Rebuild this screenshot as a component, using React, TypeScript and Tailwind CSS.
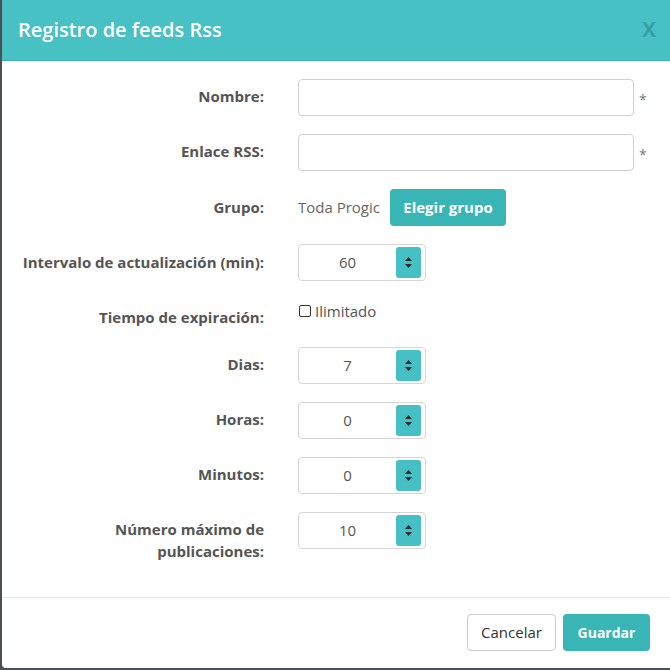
import React from "react";

const FONT = { fontFamily: "'Open Sans', 'Noto Sans', sans-serif" };

function Label({ children, pt = "pt-[7px]" }: { children: React.ReactNode; pt?: string }) {
  return (
    <div className={`w-[262px] shrink-0 text-right text-[15px] font-bold leading-[22px] text-[#555] ${pt}`}>
      {children}
    </div>
  );
}

function Spinner() {
  return (
    <div className="my-[3px] mr-[4px] flex h-[31px] w-[25px] flex-col items-center justify-center gap-[3px] rounded-[3px] bg-[#47c0c5]">
      <svg width="7" height="4" viewBox="0 0 7 4">
        <path d="M0 4 L3.5 0 L7 4 Z" fill="#2b2b2b" />
      </svg>
      <svg width="7" height="4" viewBox="0 0 7 4">
        <path d="M0 0 L7 0 L3.5 4 Z" fill="#2b2b2b" />
      </svg>
    </div>
  );
}

function NumberInput({ value }: { value: string }) {
  return (
    <div className="flex h-[37px] w-[128px] items-center rounded-[4px] border border-[#d6d6d6] bg-white">
      <span className="flex-1 text-center text-[15px] text-[#555]">{value}</span>
      <Spinner />
    </div>
  );
}

function TextInput() {
  return (
    <div className="flex items-center">
      <div className="h-[37px] w-[336px] rounded-[4px] border border-[#d0d0d0] bg-white" />
      <span className="ml-[5px] mt-[4px] text-[14px] text-[#777]">*</span>
    </div>
  );
}

const NUMBERS = [
  { label: "Dias:", value: "7" },
  { label: "Horas:", value: "0" },
  { label: "Minutos:", value: "0" },
];

export default function App() {
  return (
    <div className="h-[670px] w-[670px] overflow-hidden bg-[#4a5053]" style={FONT}>
      <div className="ml-[2px] flex h-[668px] flex-col overflow-hidden rounded-bl-[4px] bg-white">
        <header className="flex h-[61px] shrink-0 items-center justify-between border-b border-[#3fb0b4] bg-[#48c1c5] pl-[16px] pr-[14px]">
          <h1 className="text-[20px] font-semibold text-white">Registro de feeds Rss</h1>
          <span className="text-[21px] font-bold text-[#35a0a3]">X</span>
        </header>

        <div className="flex h-[536px] flex-col gap-[18px] pt-[18px]">
          <div className="flex items-start">
            <Label pt="pt-[6px]">Nombre:</Label>
            <div className="ml-[34px]">
              <TextInput />
            </div>
          </div>
          <div className="flex items-start">
            <Label pt="pt-[6px]">Enlace RSS:</Label>
            <div className="ml-[34px]">
              <TextInput />
            </div>
          </div>
          <div className="flex items-start">
            <Label>Grupo:</Label>
            <div className="ml-[34px] flex items-center gap-[10px]">
              <span className="text-[15px] text-[#666]">Toda Progic</span>
              <button
                type="button"
                className="h-[37px] w-[116px] rounded-[4px] bg-[#3ab5b6] text-[15px] font-bold text-white"
              >
                Elegir grupo
              </button>
            </div>
          </div>
          <div className="flex items-start">
            <Label>Intervalo de actualización (min):</Label>
            <div className="ml-[34px]">
              <NumberInput value="60" />
            </div>
          </div>
          <div className="flex h-[30px] items-start">
            <Label pt="pt-[7px]">Tiempo de expiración:</Label>
            <label className="ml-[35px] mt-[1px] flex items-center gap-[4px] text-[15px] text-[#555]">
              <span className="h-[12px] w-[12px] rounded-[2px] border-[1.5px] border-[#333]" />
              Ilimitado
            </label>
          </div>
          {NUMBERS.map((n) => (
            <div key={n.label} className="flex items-start">
              <Label pt="pt-[6px]">{n.label}</Label>
              <div className="ml-[34px]">
                <NumberInput value={n.value} />
              </div>
            </div>
          ))}
          <div className="flex items-start">
            <Label pt="pt-[6px]">
              Número máximo de
              <br />
              publicaciones:
            </Label>
            <div className="ml-[34px]">
              <NumberInput value="10" />
            </div>
          </div>
        </div>

        <footer className="flex justify-end gap-[7px] border-t border-[#e5e5e5] pr-[20px] pt-[16px]">
          <button
            type="button"
            className="h-[37px] w-[89px] rounded-[4px] border border-[#ccc] bg-white text-[15px] text-[#333]"
          >
            Cancelar
          </button>
          <button
            type="button"
            className="h-[37px] w-[87px] rounded-[4px] bg-[#3ab5b6] text-[14px] font-bold text-white"
          >
            Guardar
          </button>
        </footer>
      </div>
    </div>
  );
}
